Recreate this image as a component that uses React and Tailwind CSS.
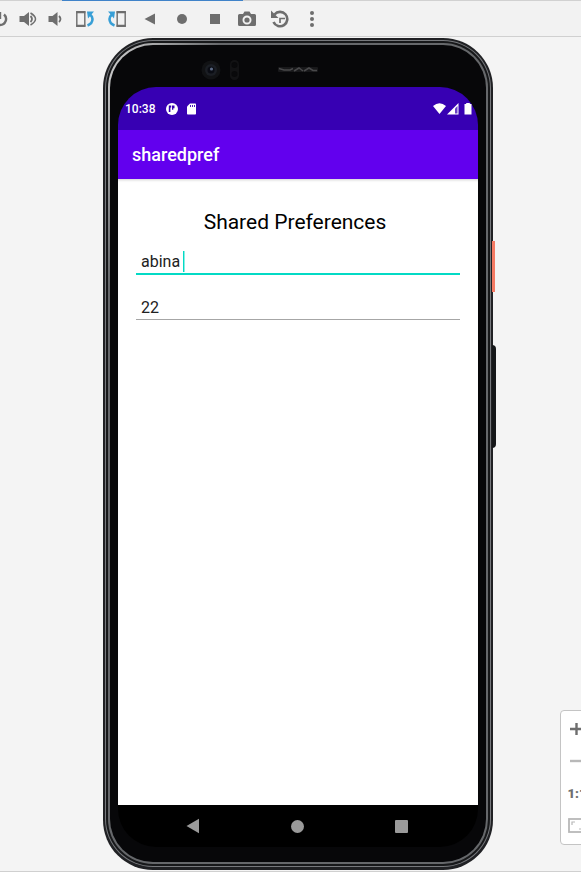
import React from "react";

function Tool({ label, w, children }) {
  return (
    <button type="button" aria-label={label} className={`flex h-6 shrink-0 items-center justify-center ${w}`}>
      {children}
    </button>
  );
}

function Rotate({ flip }) {
  return (
    <svg width="20" height="18" viewBox="0 0 20 18" className={flip ? "-scale-x-100" : ""} fill="none">
      <rect x="1.8" y="2" width="8" height="14" stroke="#757575" strokeWidth="1.5" />
      <path d="M1.2 2.2h9.200M1.200 15.800h9.200" stroke="#6e6e6e" strokeWidth="2.2" />
      <path d="M12.500 15.500Q17.500 13.500 17.500 9Q17.500 6.500 15 4.500" stroke="#389fd6" strokeWidth="2.600" />
      <path d="M12 1.500h7l-6 7z" fill="#389fd6" />
    </svg>
  );
}

function Toolbar() {
  return (
    <header className="border-b border-[#d0d0d0] bg-[#f2f2f2]">
      <div className="h-px bg-[#d1d1d1] pl-[62px]">
        <div className="h-px w-[181px] bg-[#4083c9]" />
      </div>
      <div className="flex h-[35px] items-center overflow-hidden text-[#6e6e6e]">
        <Tool label="Power" w="w-3">
          <svg width="12" height="18" viewBox="0 0 12 18" fill="none" stroke="currentColor" strokeWidth="2.4">
            <path d="M0 2v7M4 4.500A6 6 0 0 1 0 15" />
          </svg>
        </Tool>
        <Tool label="Volume up" w="w-8">
          <svg width="18" height="18" viewBox="0 0 18 18" fill="none" stroke="currentColor">
            <path d="M0.500 6h4.500l5-4v14l-5-4H0.500z" fill="currentColor" stroke="none" />
            <path d="M11.500 6q3 3 0 6" strokeWidth="1.800" />
            <path d="M11.500 3q10 6 0 12" strokeWidth="1.500" />
          </svg>
        </Tool>
        <Tool label="Volume down" w="w-6">
          <svg width="18" height="18" viewBox="0 0 18 18" fill="none" stroke="currentColor">
            <path d="M1.500 6h4l5-4v14l-5-4h-4z" fill="currentColor" stroke="none" />
            <path d="M12 6q3 3 0 6" strokeWidth="1.800" />
          </svg>
        </Tool>
        <Tool label="Rotate left" w="w-[34px]"><Rotate /></Tool>
        <Tool label="Rotate right" w="w-[30px]"><Rotate flip /></Tool>
        <Tool label="Back" w="w-9">
          <svg width="12" height="12" viewBox="0 0 12 12"><path d="M0.500 6L11 0.500v11z" fill="currentColor" /></svg>
        </Tool>
        <Tool label="Home" w="w-7"><span className="size-[10px] rounded-full bg-current" /></Tool>
        <Tool label="Overview" w="w-[38px]"><span className="size-[10px] bg-current" /></Tool>
        <Tool label="Take screenshot" w="w-[26px]">
          <svg width="18" height="16" viewBox="0 0 18 16">
            <path fillRule="evenodd" fill="currentColor" d="M1.500 3h3.500l1.500-2.500h5L13 3h3.500q1.500 0 1.500 1.500v9q0 1.500-1.500 1.500h-15Q0 15 0 13.500v-9Q0 3 1.500 3zM9 4.500a4.500 4.500 0 1 0 0 9a4.500 4.500 0 1 0 0-9z" />
            <circle cx="9" cy="9" r="2.600" fill="currentColor" />
          </svg>
        </Tool>
        <Tool label="Snapshots" w="w-10">
          <svg width="20" height="18" viewBox="0 0 20 18" fill="none" stroke="currentColor">
            <path d="M4.500 4.500A7.200 7.200 0 1 1 3.500 12" strokeWidth="2.600" />
            <path d="M1 0.500v7.500h7.500z" fill="currentColor" stroke="none" />
            <path d="M10 13V8.500H15" strokeWidth="1.700" />
          </svg>
        </Tool>
        <Tool label="More" w="w-6">
          <svg width="4" height="16" viewBox="0 0 4 16" fill="currentColor">
            <circle cx="2" cy="2" r="2" /><circle cx="2" cy="8" r="2" /><circle cx="2" cy="14" r="2" />
          </svg>
        </Tool>
      </div>
    </header>
  );
}

function StatusBar() {
  return (
    <div className="flex h-[43px] items-center rounded-t-[38px] bg-[#3700b3] pr-[6px] pl-[7px] text-white">
      <span className="text-[12px] leading-4 font-medium">10:38</span>
      <svg className="ml-[11px]" width="12" height="12" viewBox="0 0 12 12">
        <circle cx="6" cy="6" r="6" fill="white" />
        <path d="M2.800 2.500h2.400v2H4.400v4.500H2.800zM6 2.500h2.500v2.800H7.300v1.500H6z" fill="#3700b3" />
      </svg>
      <svg className="ml-[9px]" width="9" height="12" viewBox="0 0 9 12">
        <path d="M3 0.500h5.200q.8 0 .8.800v9.400q0 .8-.8.800H.8q-.8 0-.8-.8V3.500z" fill="white" />
        <path d="M3.500 2v2M5.500 2v2M7.500 2v2" stroke="#3700b3" strokeWidth="0.900" />
      </svg>
      <svg className="ml-auto" width="13" height="11" viewBox="0 0 13 11"><path d="M0 3Q6.500-2.500 13 3L6.500 11z" fill="white" /></svg>
      <svg className="ml-px" width="12" height="12" viewBox="0 0 12 12">
        <path d="M0 11.500L11.500 0v11.500z" fill="white" />
        <path d="M8 5.500l2.500-2.500v7.500H8z" fill="#3700b3" opacity=".75" />
      </svg>
      <svg className="ml-[5px]" width="8" height="12" viewBox="0 0 8 12"><path d="M2.200 0h3.600v1H7.500v10.500H.5V1h1.700z" fill="white" /></svg>
    </div>
  );
}

function Phone() {
  return (
    <div className="relative w-[390px] rounded-[50px] bg-[#202124] p-[2px]">
      <div className="absolute top-[203px] -right-[2px] h-[51px] w-[3px] bg-[#f47a64]" />
      <div className="absolute top-[307px] -right-[3px] h-[103px] w-1 rounded-r-sm bg-[#151719]" />
      <div className="rounded-[48px] bg-[#77797d] p-px">
        <div className="rounded-[47px] bg-[#17181a] p-[2px]">
          <div className="rounded-[45px] bg-linear-to-br from-[#d5d5d5] via-[#66686b] via-15% to-[#66686b] p-[2px]">
            <div className="rounded-[43px] bg-[#070709] px-2 pb-[15px]">
              <div className="flex h-[42px] items-center pt-[6px] pl-[77px]">
                <svg width="130" height="22" viewBox="0 0 130 22">
                  <circle cx="16" cy="12" r="9.500" fill="#111214" />
                  <circle cx="16" cy="12" r="6" fill="#1b1e24" />
                  <circle cx="16" cy="12" r="3.500" fill="#0a0c14" />
                  <circle cx="16.500" cy="11" r="1.600" fill="#5d6b85" />
                  <rect x="35" y="2" width="9" height="20" rx="4.500" fill="#121214" />
                  <circle cx="39.500" cy="7" r="3" fill="#09090b" />
                  <circle cx="39.500" cy="16" r="3" fill="#09090b" />
                  <rect x="83" y="9" width="40" height="5" rx="1" fill="#18181a" />
                  <path d="M84 10.500l5 1.500h6l3-1.500M99 13l5-3 4 3M109 13l5-3 4 2.500h4" stroke="#48484a" strokeWidth="1.500" fill="none" />
                </svg>
              </div>
              <div className="flex flex-col">
                <StatusBar />
                <h1 className="flex h-[49px] items-center bg-[#6200ee] px-[14px] pt-px text-[18px] leading-6 font-medium text-white">sharedpref</h1>
                <main className="h-[626px] bg-white px-[18px] pt-[29px] shadow-[inset_0_3px_3px_-2px_#00000030]">
                  <h2 className="pr-[6px] text-center text-[21px] leading-7 text-black">Shared Preferences</h2>
                  <div className="flex flex-col gap-3 pt-1 text-[16px] text-[#212121]">
                    <div className="relative">
                      <input aria-label="Name" defaultValue="abina " className="block h-[35px] w-full border-b-2 border-[#03dac5] bg-transparent px-[5px] pt-[11px] pb-[2px] leading-5 outline-none" />
                      <span className="absolute top-[11px] left-[47px] h-[21px] w-px bg-[#03dac5] shadow-[1px_0_0_#8aeee4]" />
                    </div>
                    <input aria-label="Age" defaultValue="22" className="block h-[33px] w-full border-b border-[#a6a6a6] bg-transparent px-[5px] pt-2 leading-5 outline-none" />
                  </div>
                </main>
                <nav className="flex h-[42px] items-center justify-between rounded-b-[38px] bg-black pr-[70px] pl-[68px]">
                  <button type="button" aria-label="Back">
                    <svg width="14" height="16" viewBox="0 0 14 16"><path d="M0.500 8L13 0.800v14.400z" fill="#9a9a9a" /></svg>
                  </button>
                  <button type="button" aria-label="Home" className="size-[13px] rounded-full bg-[#9a9a9a]" />
                  <button type="button" aria-label="Recents" className="size-[13px] rounded-[1px] bg-[#9a9a9a]" />
                </nav>
              </div>
            </div>
          </div>
        </div>
      </div>
    </div>
  );
}

function ZoomPanel() {
  return (
    <aside className="absolute right-[-13px] bottom-[27px] flex h-[135px] w-[34px] flex-col items-center justify-between rounded-[4px] border border-[#c4c4c4] bg-white py-[9px] text-[#6e6e6e]">
      <button type="button" aria-label="Zoom in">
        <svg width="16" height="18" viewBox="0 0 16 18"><path d="M1 9h13M7.500 3v12" stroke="currentColor" strokeWidth="2.400" /></svg>
      </button>
      <button type="button" aria-label="Zoom out">
        <svg width="16" height="18" viewBox="0 0 16 18"><path d="M1 9h14" stroke="#b8b8b8" strokeWidth="2.400" /></svg>
      </button>
      <button type="button" className="text-[13px] leading-[18px] font-black">1:1</button>
      <button type="button" aria-label="Fit to screen">
        <svg width="18" height="18" viewBox="0 0 18 18" fill="none" stroke="#b8b8b8">
          <rect x="1" y="2" width="16" height="13" strokeWidth="1.800" />
          <path d="M4 8V5h3M14 9v3h-3" strokeWidth="1.200" />
        </svg>
      </button>
    </aside>
  );
}

export default function App() {
  return (
    <div className="relative flex min-h-screen flex-col overflow-hidden bg-[#f4f4f4] font-[Roboto,sans-serif]">
      <Toolbar />
      <div className="flex flex-1 justify-center border-b border-[#d0d0d0] pt-px pb-px pl-[15px]">
        <Phone />
      </div>
      <ZoomPanel />
    </div>
  );
}
